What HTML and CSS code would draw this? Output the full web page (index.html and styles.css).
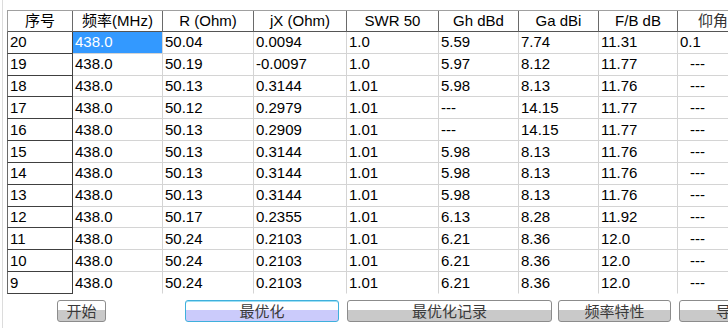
FILE: index.html
```html
<!DOCTYPE html>
<html lang="zh">
<head>
<meta charset="utf-8">
<title>优化结果</title>
<link rel="stylesheet" href="styles.css">
</head>
<body>
<div class="screen">
  <div class="grid-wrap">
    <table class="grid">
      <colgroup>
        <col class="c1"><col class="c2"><col class="c3"><col class="c4"><col class="c5">
        <col class="c6"><col class="c7"><col class="c8"><col class="c9">
      </colgroup>
      <thead>
        <tr>
          <th class="first">序号</th><th>频率(MHz)</th><th>R (Ohm)</th><th>jX (Ohm)</th><th>SWR 50</th>
          <th>Gh dBd</th><th>Ga dBi</th><th>F/B dB</th><th class="edge">仰角</th>
        </tr>
      </thead>
      <tbody>
        <tr><th class="rh">20</th><td class="sel">438.0</td><td>50.04</td><td>0.0094</td><td>1.0</td><td>5.59</td><td>7.74</td><td>11.31</td><td>0.1</td></tr>
        <tr><th class="rh">19</th><td>438.0</td><td>50.19</td><td>-0.0097</td><td>1.0</td><td>5.97</td><td>8.12</td><td>11.77</td><td class="dash">---</td></tr>
        <tr><th class="rh">18</th><td>438.0</td><td>50.13</td><td>0.3144</td><td>1.01</td><td>5.98</td><td>8.13</td><td>11.76</td><td class="dash">---</td></tr>
        <tr><th class="rh">17</th><td>438.0</td><td>50.12</td><td>0.2979</td><td>1.01</td><td>---</td><td>14.15</td><td>11.77</td><td class="dash">---</td></tr>
        <tr><th class="rh">16</th><td>438.0</td><td>50.13</td><td>0.2909</td><td>1.01</td><td>---</td><td>14.15</td><td>11.77</td><td class="dash">---</td></tr>
        <tr><th class="rh">15</th><td>438.0</td><td>50.13</td><td>0.3144</td><td>1.01</td><td>5.98</td><td>8.13</td><td>11.76</td><td class="dash">---</td></tr>
        <tr><th class="rh">14</th><td>438.0</td><td>50.13</td><td>0.3144</td><td>1.01</td><td>5.98</td><td>8.13</td><td>11.76</td><td class="dash">---</td></tr>
        <tr><th class="rh">13</th><td>438.0</td><td>50.13</td><td>0.3144</td><td>1.01</td><td>5.98</td><td>8.13</td><td>11.76</td><td class="dash">---</td></tr>
        <tr><th class="rh">12</th><td>438.0</td><td>50.17</td><td>0.2355</td><td>1.01</td><td>6.13</td><td>8.28</td><td>11.92</td><td class="dash">---</td></tr>
        <tr><th class="rh">11</th><td>438.0</td><td>50.24</td><td>0.2103</td><td>1.01</td><td>6.21</td><td>8.36</td><td>12.0</td><td class="dash">---</td></tr>
        <tr><th class="rh">10</th><td>438.0</td><td>50.24</td><td>0.2103</td><td>1.01</td><td>6.21</td><td>8.36</td><td>12.0</td><td class="dash">---</td></tr>
        <tr class="last"><th class="rh">9</th><td>438.0</td><td>50.24</td><td>0.2103</td><td>1.01</td><td>6.21</td><td>8.36</td><td>12.0</td><td class="dash">---</td></tr>
      </tbody>
    </table>
  </div>
  <div class="buttons">
    <button class="btn b-start">开始</button>
    <button class="btn b-opt default">最优化</button>
    <button class="btn b-log">最优化记录</button>
    <button class="btn b-freq">频率特性</button>
    <button class="btn b-exp">导出</button>
  </div>
</div>
</body>
</html>
```

FILE: styles.css
```css
html, body {
  margin: 0;
  padding: 0;
  background: #ffffff;
}

body {
  width: 728px;
  height: 328px;
  overflow: hidden;
  font-family: "Liberation Sans", "Noto Sans CJK SC", sans-serif;
  font-size: 15px;
  color: #000;
}

.screen {
  margin-left: 2px;
  border-left: 1px solid #dcdcdc;
  padding: 10px 0 0 4px;
  height: 318px;
}

.grid-wrap {
  width: 721px;
  overflow: hidden;
}

.grid {
  table-layout: fixed;
  border-collapse: separate;
  border-spacing: 0;
  width: 741px;
  border-top: 1px solid #a0a0a0;
}

.c1 { width: 66px; }
.c2 { width: 90px; }
.c3 { width: 91px; }
.c4 { width: 93px; }
.c5 { width: 92px; }
.c6 { width: 80px; }
.c7 { width: 80px; }
.c8 { width: 79px; }
.c9 { width: 70px; }

.grid th,
.grid td {
  padding: 0 0 0 2px;
  white-space: nowrap;
  overflow: hidden;
  line-height: 18px;
  font-weight: normal;
  text-align: left;
}

.grid thead th {
  height: 21px;
  box-sizing: border-box;
  text-align: center;
  padding: 0;
  background: #ffffff;
  border-right: 1px solid #6a6a6a;
  border-bottom: 1px solid #555555;
}

.grid thead th.first {
  border-left: 1px solid #a0a0a0;
}

.grid thead th.edge {
  text-align: left;
  padding-left: 20px;
  color: #333;
}

.grid tbody tr {
  height: 21.83px;
}

.grid td {
  border-right: 1px solid #d4d4d4;
  border-bottom: 1px solid #d4d4d4;
}

.grid th.rh {
  padding-left: 2px;
  background: #ffffff;
  border-left: 1px solid #6a6a6a;
  border-right: 1px solid #404040;
  border-bottom: 1px solid #404040;
}

.grid td.sel {
  background: #3399ff;
  color: #ffffff;
}

.grid td.dash {
  padding-left: 12px;
}

.grid tr.last td {
  border-bottom-color: transparent;
}

.buttons {
  display: flex;
  margin-top: 6px;
  padding-left: 50px;
}

.btn {
  height: 22px;
  box-sizing: border-box;
  padding: 0;
  margin: 0;
  font-family: "Noto Sans CJK SC", "Liberation Sans", sans-serif;
  font-size: 15px;
  line-height: 18px;
  color: #3a3a3a;
  border: 1px solid #8c8c8c;
  border-radius: 3px;
  background: linear-gradient(#ffffff 0, #ffffff 45%, #c9c9c9 45%, #c9c9c9 100%);
  flex: none;
}

.btn.default {
  border-color: #3fb0dc;
  box-shadow: inset 0 1px 0 #9fe0f4;
  background: linear-gradient(#ffffff 0, #ffffff 45%, #cbcbfb 45%, #cbcbfb 100%);
}

.b-start { width: 49px; }
.b-opt { width: 154px; margin-left: 79px; }
.b-log { width: 205px; margin-left: 8px; }
.b-freq { width: 113px; margin-left: 6px; }
.b-exp {
  width: 104px;
  margin-left: 8px;
  text-align: left;
  padding-left: 36px;
}
```
